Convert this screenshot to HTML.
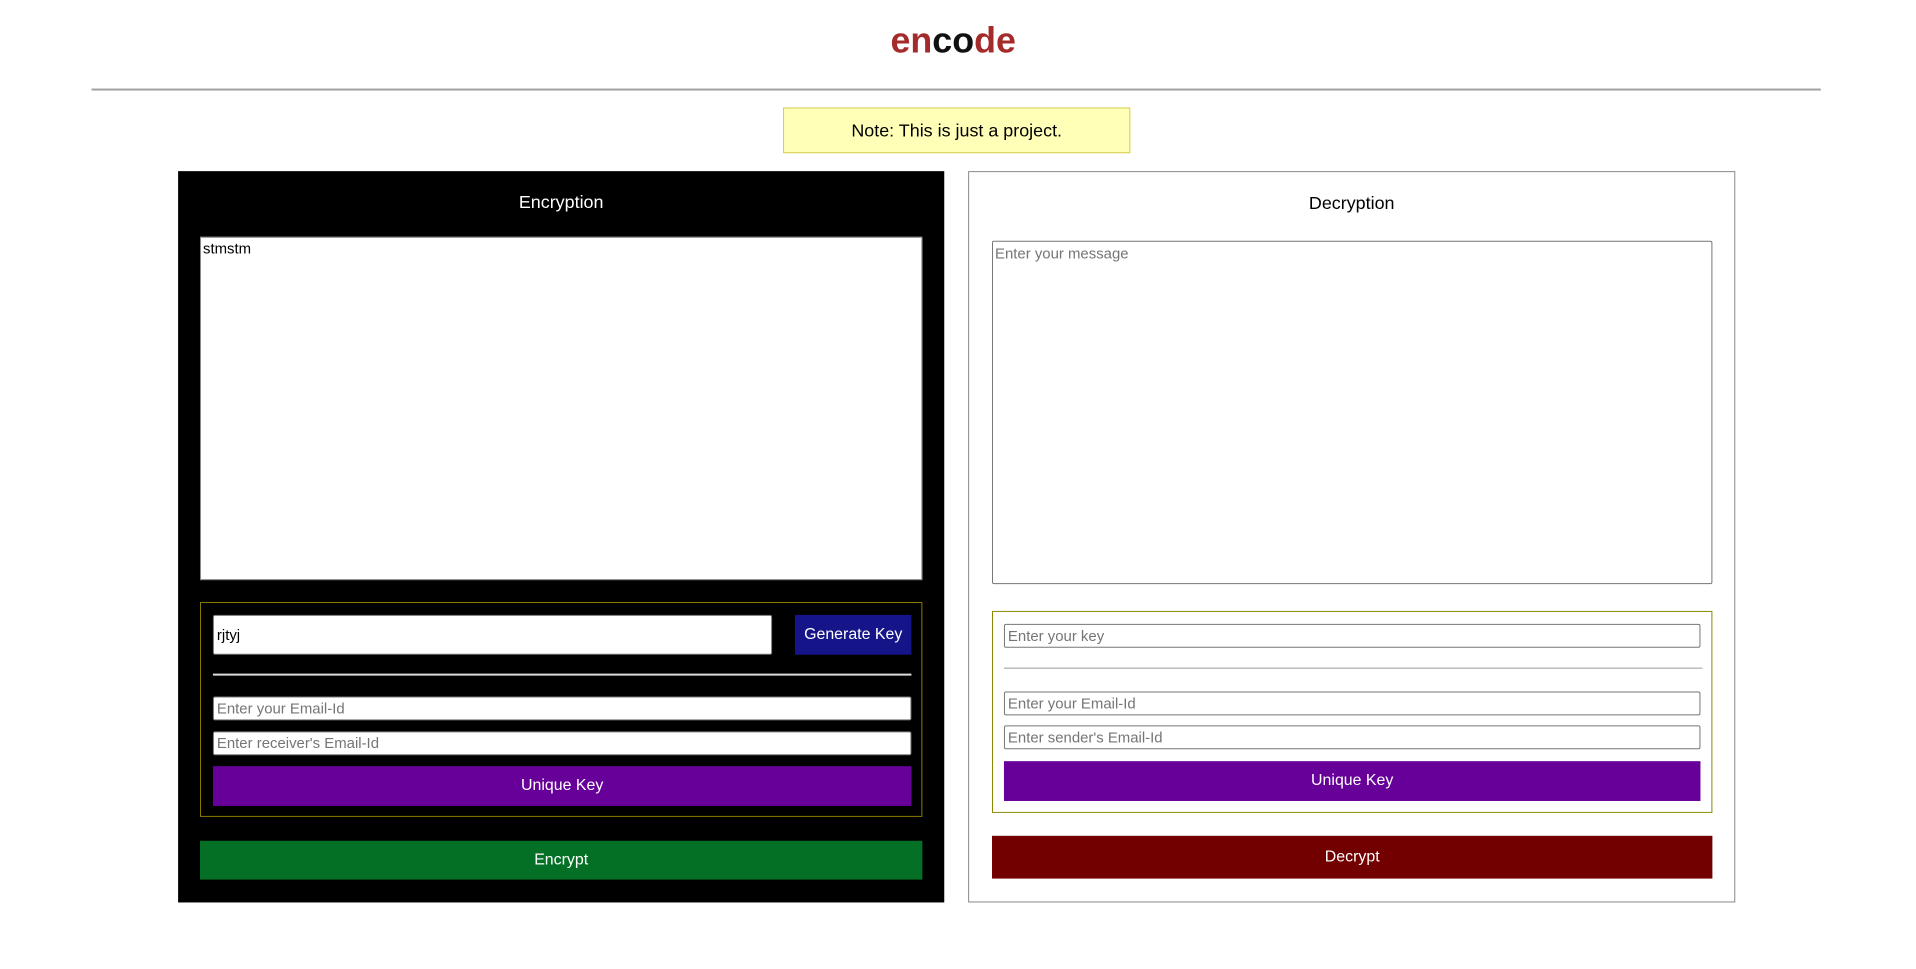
<!DOCTYPE html>
<html><head><meta charset="utf-8"><style>
*{box-sizing:border-box;margin:0;padding:0}
body{width:1916px;height:969px;background:#fff;font-family:"Liberation Sans",Arial,sans-serif;position:relative;overflow:hidden}
#w{position:absolute;left:0;top:0;width:1916px;height:969px;transform:scale(0.995);transform-origin:0 0}
.a{position:absolute}
.t{text-align:center}
.inp{position:absolute;background:#fff;border:1px solid #767676;border-radius:2px;font-size:15px;color:#757575;padding-left:3px;display:flex;align-items:center}
.btn{position:absolute;color:#fff;font-size:16px;display:flex;align-items:center;justify-content:center}
</style></head><body><div id="w">
<div class="a t" style="left:0;width:1916px;top:20px;font-size:36px;font-weight:bold;color:#a52a2a">en<span style="color:#111">co</span>de</div>
<div class="a" style="left:92px;width:1738px;top:89px;height:2px;background:#a0a0a0"></div>
<div class="a t" style="left:787px;top:108px;width:349px;height:46px;background:#ffffb8;border:1px solid #d4cc50;font-size:18px;line-height:44px;color:#000">Note: This is just a project.</div>

<div class="a" style="left:179px;top:172px;width:770px;height:735px;background:#000"></div>
<div class="a t" style="left:179px;width:770px;top:193px;font-size:18px;color:#fff">Encryption</div>
<div class="a" style="left:201px;top:238px;width:726px;height:345px;background:#fff;border:1px solid #888;font-size:15px;padding:3px 2px">stmstm</div>
<div class="a" style="left:201px;top:605px;width:726px;height:216px;border:1px solid #8a7d00"></div>
<div class="inp" style="left:214px;top:618px;width:562px;height:40px;color:#000">rjtyj</div>
<div class="btn" style="left:799px;top:618px;width:117px;height:40px;background:#151589">Generate Key</div>
<div class="a" style="left:214px;top:677px;width:702px;height:2px;background:#ddd"></div>
<div class="inp" style="left:214px;top:700px;width:702px;height:24px">Enter your Email-Id</div>
<div class="inp" style="left:214px;top:735px;width:702px;height:24px">Enter receiver's Email-Id</div>
<div class="btn" style="left:214px;top:770px;width:702px;height:40px;background:#660099">Unique Key</div>
<div class="btn" style="left:201px;top:845px;width:726px;height:39px;background:#037025">Encrypt</div>

<div class="a" style="left:973px;top:172px;width:771px;height:735px;border:1px solid #888"></div>
<div class="a t" style="left:973px;width:771px;top:194px;font-size:18px;color:#000">Decryption</div>
<div class="a" style="left:997px;top:242px;width:724px;height:345px;background:#fff;border:1px solid #767676;border-radius:2px;font-size:15px;color:#757575;padding:4px 2px">Enter your message</div>
<div class="a" style="left:997px;top:614px;width:724px;height:203px;border:1px solid #8a8a00"></div>
<div class="inp" style="left:1009px;top:627px;width:700px;height:24px">Enter your key</div>
<div class="a" style="left:1009px;top:671px;width:702px;height:1px;background:#999"></div>
<div class="inp" style="left:1009px;top:695px;width:700px;height:24px">Enter your Email-Id</div>
<div class="inp" style="left:1009px;top:729px;width:700px;height:24px">Enter sender's Email-Id</div>
<div class="btn" style="left:1009px;top:765px;width:700px;height:40px;background:#660099">Unique Key</div>
<div class="btn" style="left:997px;top:840px;width:724px;height:43px;background:#720000">Decrypt</div>
</div></body></html>
